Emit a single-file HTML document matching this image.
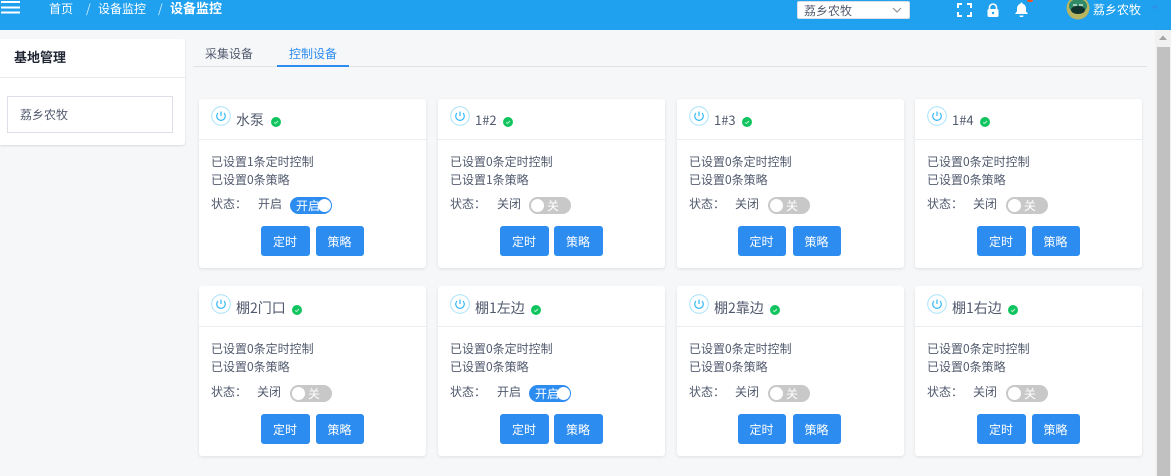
<!DOCTYPE html>
<html lang="zh"><head><meta charset="utf-8"><title>设备监控</title>
<style>
*{box-sizing:border-box;margin:0;padding:0}
html,body{width:1171px;height:476px;overflow:hidden;background:#f6f7f9}
body{position:relative;font-family:"WenQuanYi Zen Hei","Noto Sans CJK SC",sans-serif;font-size:12px;color:#515a6e}
.a{position:absolute;white-space:nowrap}
.top{left:0;top:0;width:1171px;height:30px;background:#1fa1f0}
.w{color:#fff;line-height:16px}
.card{position:absolute;width:227px;height:169px;background:#fff;border-radius:3px;box-shadow:0 1px 3px rgba(0,0,0,.1)}
.card .hr{position:absolute;left:0;top:40px;width:227px;height:1px;background:#ebeef0}
.r2 .hr{top:39px}
.r2:before{content:"";position:absolute;left:0;top:-1px;width:227px;height:4px;background:#fff;border-radius:3px 3px 0 0}
.card .pw{position:absolute;left:12px;top:7px}
.card .t{position:absolute;left:37px;top:11px;font-size:14px;line-height:20px;white-space:nowrap}
.card .dot{position:absolute;top:18px;width:10px;height:10px}
.card .l{position:absolute;left:12px;line-height:18px;white-space:nowrap}
.card .s{position:absolute;width:42px;height:17px;top:98px;left:91px;border-radius:9px;color:#fff;font-size:12px;line-height:17px}
.on{background:#2d8cf0}
.on span{position:absolute;left:6px;top:0}
.on i{position:absolute;right:1px;top:2px;width:13px;height:13px;border-radius:50%;background:#fff}
.off{background:#c8c8c8}
.off span{position:absolute;left:18px;top:0}
.off i{position:absolute;left:2px;top:2px;width:13px;height:13px;border-radius:50%;background:#fff}
.b{position:absolute;top:127px;height:30px;background:#2d8cf0;border-radius:3px;color:#fff;text-align:center;line-height:32px;font-size:12px;padding-right:1px}
.b1{left:62px;width:49px}.b2{left:117px;width:48px}
.c2 .b2{left:116px;width:49px}
.c3 .b1{left:61px;width:48px}.c3 .b2{left:116px;width:48px}
</style></head><body>
<div class="a top"></div>
<svg class="a" style="left:0;top:0" width="22" height="16"><path d="M1 2h19M1 7.500h19M1 12.500h19" stroke="#fff" stroke-width="2" fill="none"/></svg>
<div class="a w" style="left:49px;top:1px">首页</div>
<div class="a w" style="left:86px;top:1px;opacity:.8">/</div>
<div class="a w" style="left:98px;top:1px">设备监控</div>
<div class="a w" style="left:158px;top:1px;opacity:.8">/</div>
<div class="a w" style="left:170px;top:0;font-weight:bold;font-size:13px">设备监控</div>

<div class="a" style="left:797px;top:1px;width:113px;height:18px;background:#fff;border:1px solid #dcdfe6;border-radius:2px;line-height:18px;padding-left:6px;color:#515a6e">荔乡农牧</div>
<svg class="a" style="left:892px;top:7px" width="10" height="7"><path d="M1 1l4 4 4-4" stroke="#909399" stroke-width="1.200" fill="none"/></svg>
<svg class="a" style="left:957px;top:3px" width="15" height="14"><path d="M1 5V1h4M10 1h4v4M14 9v4h-4M5 13H1V9" stroke="#fff" stroke-width="2" fill="none"/></svg>
<svg class="a" style="left:986px;top:3px" width="14" height="14"><path d="M3.500 6V4.500a3.500 3.500 0 0 1 7 0V6" stroke="#fff" stroke-width="1.600" fill="none"/><rect x="1.500" y="6" width="11" height="8" rx="1.500" fill="#fff"/><circle cx="7" cy="10" r="1.200" fill="#1fa1f0"/></svg>
<svg class="a" style="left:1014px;top:2px" width="15" height="15"><path d="M7.500 0.500a1 1 0 0 1 1 1.200c2.500.6 3.500 2.700 3.500 5v2.500l1.800 2.300v.5H1.200v-.5L3 9.200V6.700c0-2.300 1-4.400 3.500-5a1 1 0 0 1 1-1.200z" fill="#fff"/><path d="M5.500 13.500a2 2 0 0 0 4 0z" fill="#fff"/></svg>
<div class="a" style="left:1027px;top:0;width:6px;height:2px;background:#f4511e;border-radius:0 0 3px 3px"></div>
<svg class="a" style="left:1066px;top:0" width="24" height="20"><circle cx="12" cy="8" r="11.500" fill="#b9b45f"/><ellipse cx="12" cy="6" rx="9" ry="7" fill="#2f8a68"/><ellipse cx="12" cy="10" rx="7" ry="4" fill="#12332d"/><path d="M7 5h4M13 5h4" stroke="#cfe5d8" stroke-width="1.500"/></svg>
<div class="a w" style="left:1093px;top:2px">荔乡农牧</div>
<svg class="a" style="left:1151px;top:6px" width="8" height="4"><path d="M0 0h7L3.500 3.500z" fill="#2f8fe8"/></svg>

<div class="a" style="left:0;top:39px;width:185px;height:106px;background:#fff;border-radius:0 3px 3px 0;box-shadow:0 1px 2px rgba(0,0,0,.12)">
  <div class="a" style="left:14px;top:9px;line-height:18px;font-weight:bold;font-size:13px;color:#1f2533">基地管理</div>
  <div class="a" style="left:0;top:38px;width:185px;height:1px;background:#e8eaee"></div>
  <div class="a" style="left:7px;top:57px;width:166px;height:37px;border:1px solid #dcdfe6;line-height:35px;padding-left:12px">荔乡农牧</div>
</div>

<div class="a" style="left:205px;top:45px;line-height:18px">采集设备</div>
<div class="a" style="left:289px;top:45px;line-height:18px;color:#2d8cf0">控制设备</div>
<div class="a" style="left:193px;top:66px;width:954px;height:1px;background:#dfe1e6"></div>
<div class="a" style="left:277px;top:65px;width:72px;height:2px;background:#2d8cf0"></div>

<div class="card" style="left:199px;top:99px"><div class="hr"></div><svg class="pw" width="20" height="20"><circle cx="10" cy="10" r="9.300" fill="none" stroke="#a8e3fb"/><path d="M10 5.500v4.500M7 7a4.300 4.300 0 1 0 6 0" fill="none" stroke="#2fb8f8" stroke-width="1.200"/></svg><div class="t">水泵</div><svg class="dot" style="left:72px" viewBox="0 0 10 10"><circle cx="5" cy="5" r="5" fill="#0fc45f"/><path d="M3 5.500l1.500 1L7 4" stroke="#bff0d2" fill="none"/></svg><div class="l" style="top:54px">已设置1条定时控制</div><div class="l" style="top:72px">已设置0条策略</div><div class="l" style="top:96px">状态：</div><div class="l" style="left:59px;top:96px">开启</div><div class="s on"><span>开启</span><i></i></div><div class="b b1">定时</div><div class="b b2">策略</div></div>

<div class="card c2" style="left:438px;top:99px"><div class="hr"></div><svg class="pw" width="20" height="20"><circle cx="10" cy="10" r="9.300" fill="none" stroke="#a8e3fb"/><path d="M10 5.500v4.500M7 7a4.300 4.300 0 1 0 6 0" fill="none" stroke="#2fb8f8" stroke-width="1.200"/></svg><div class="t" style="font-size:13px">1#2</div><svg class="dot" style="left:65px" viewBox="0 0 10 10"><circle cx="5" cy="5" r="5" fill="#0fc45f"/><path d="M3 5.500l1.500 1L7 4" stroke="#bff0d2" fill="none"/></svg><div class="l" style="top:54px">已设置0条定时控制</div><div class="l" style="top:72px">已设置1条策略</div><div class="l" style="top:96px">状态：</div><div class="l" style="left:59px;top:96px">关闭</div><div class="s off"><i></i><span>关</span></div><div class="b b1">定时</div><div class="b b2">策略</div></div>

<div class="card c3" style="left:677px;top:99px"><div class="hr"></div><svg class="pw" width="20" height="20"><circle cx="10" cy="10" r="9.300" fill="none" stroke="#a8e3fb"/><path d="M10 5.500v4.500M7 7a4.300 4.300 0 1 0 6 0" fill="none" stroke="#2fb8f8" stroke-width="1.200"/></svg><div class="t" style="font-size:13px">1#3</div><svg class="dot" style="left:65px" viewBox="0 0 10 10"><circle cx="5" cy="5" r="5" fill="#0fc45f"/><path d="M3 5.500l1.500 1L7 4" stroke="#bff0d2" fill="none"/></svg><div class="l" style="top:54px">已设置0条定时控制</div><div class="l" style="top:72px">已设置0条策略</div><div class="l" style="top:96px">状态：</div><div class="l" style="left:58px;top:96px">关闭</div><div class="s off"><i></i><span>关</span></div><div class="b b1">定时</div><div class="b b2">策略</div></div>

<div class="card" style="left:915px;top:99px"><div class="hr"></div><svg class="pw" width="20" height="20"><circle cx="10" cy="10" r="9.300" fill="none" stroke="#a8e3fb"/><path d="M10 5.500v4.500M7 7a4.300 4.300 0 1 0 6 0" fill="none" stroke="#2fb8f8" stroke-width="1.200"/></svg><div class="t" style="font-size:13px">1#4</div><svg class="dot" style="left:65px" viewBox="0 0 10 10"><circle cx="5" cy="5" r="5" fill="#0fc45f"/><path d="M3 5.500l1.500 1L7 4" stroke="#bff0d2" fill="none"/></svg><div class="l" style="top:54px">已设置0条定时控制</div><div class="l" style="top:72px">已设置0条策略</div><div class="l" style="top:96px">状态：</div><div class="l" style="left:58px;top:96px">关闭</div><div class="s off"><i></i><span>关</span></div><div class="b b1">定时</div><div class="b b2">策略</div></div>

<div class="card r2" style="left:199px;top:287px"><div class="hr"></div><svg class="pw" width="20" height="20"><circle cx="10" cy="10" r="9.300" fill="none" stroke="#a8e3fb"/><path d="M10 5.500v4.500M7 7a4.300 4.300 0 1 0 6 0" fill="none" stroke="#2fb8f8" stroke-width="1.200"/></svg><div class="t">棚2门口</div><svg class="dot" style="left:93px" viewBox="0 0 10 10"><circle cx="5" cy="5" r="5" fill="#0fc45f"/><path d="M3 5.500l1.500 1L7 4" stroke="#bff0d2" fill="none"/></svg><div class="l" style="top:53px">已设置0条定时控制</div><div class="l" style="top:71px">已设置0条策略</div><div class="l" style="top:96px">状态：</div><div class="l" style="left:58px;top:96px">关闭</div><div class="s off"><i></i><span>关</span></div><div class="b b1">定时</div><div class="b b2">策略</div></div>

<div class="card r2 c2" style="left:438px;top:287px"><div class="hr"></div><svg class="pw" width="20" height="20"><circle cx="10" cy="10" r="9.300" fill="none" stroke="#a8e3fb"/><path d="M10 5.500v4.500M7 7a4.300 4.300 0 1 0 6 0" fill="none" stroke="#2fb8f8" stroke-width="1.200"/></svg><div class="t">棚1左边</div><svg class="dot" style="left:93px" viewBox="0 0 10 10"><circle cx="5" cy="5" r="5" fill="#0fc45f"/><path d="M3 5.500l1.500 1L7 4" stroke="#bff0d2" fill="none"/></svg><div class="l" style="top:53px">已设置0条定时控制</div><div class="l" style="top:71px">已设置0条策略</div><div class="l" style="top:96px">状态：</div><div class="l" style="left:59px;top:96px">开启</div><div class="s on"><span>开启</span><i></i></div><div class="b b1">定时</div><div class="b b2">策略</div></div>

<div class="card r2 c3" style="left:677px;top:287px"><div class="hr"></div><svg class="pw" width="20" height="20"><circle cx="10" cy="10" r="9.300" fill="none" stroke="#a8e3fb"/><path d="M10 5.500v4.500M7 7a4.300 4.300 0 1 0 6 0" fill="none" stroke="#2fb8f8" stroke-width="1.200"/></svg><div class="t">棚2靠边</div><svg class="dot" style="left:93px" viewBox="0 0 10 10"><circle cx="5" cy="5" r="5" fill="#0fc45f"/><path d="M3 5.500l1.500 1L7 4" stroke="#bff0d2" fill="none"/></svg><div class="l" style="top:53px">已设置0条定时控制</div><div class="l" style="top:71px">已设置0条策略</div><div class="l" style="top:96px">状态：</div><div class="l" style="left:58px;top:96px">关闭</div><div class="s off"><i></i><span>关</span></div><div class="b b1">定时</div><div class="b b2">策略</div></div>

<div class="card r2" style="left:915px;top:287px"><div class="hr"></div><svg class="pw" width="20" height="20"><circle cx="10" cy="10" r="9.300" fill="none" stroke="#a8e3fb"/><path d="M10 5.500v4.500M7 7a4.300 4.300 0 1 0 6 0" fill="none" stroke="#2fb8f8" stroke-width="1.200"/></svg><div class="t">棚1右边</div><svg class="dot" style="left:93px" viewBox="0 0 10 10"><circle cx="5" cy="5" r="5" fill="#0fc45f"/><path d="M3 5.500l1.500 1L7 4" stroke="#bff0d2" fill="none"/></svg><div class="l" style="top:53px">已设置0条定时控制</div><div class="l" style="top:71px">已设置0条策略</div><div class="l" style="top:96px">状态：</div><div class="l" style="left:58px;top:96px">关闭</div><div class="s off"><i></i><span>关</span></div><div class="b b1">定时</div><div class="b b2">策略</div></div>

<div class="a" style="left:1155px;top:30px;width:16px;height:446px;background:#f1f1f1"></div>
<svg class="a" style="left:1159px;top:35px" width="8" height="6"><path d="M0 5L4 0.500 8 5z" fill="#a3a3a3"/></svg>
<div class="a" style="left:1157px;top:47px;width:13px;height:429px;background:#c1c1c1"></div>
</body></html>
